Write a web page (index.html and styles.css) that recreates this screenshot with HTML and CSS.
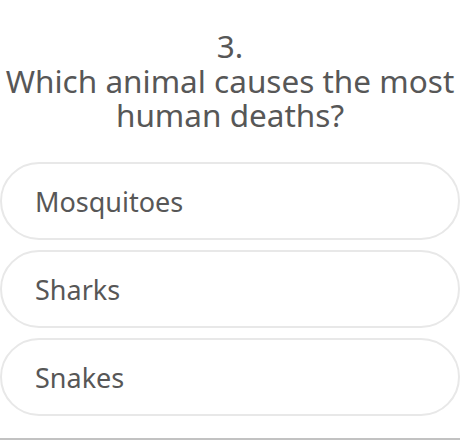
FILE: index.html
```html
<!DOCTYPE html>
<html>
<head>
<meta charset="utf-8">
<link rel="stylesheet" href="styles.css">
</head>
<body>
<div class="quiz">
  <div class="number">3.</div>
  <h1 class="question">Which animal causes the most<br>human deaths?</h1>
  <ul class="options">
    <li class="option">Mosquitoes</li>
    <li class="option">Sharks</li>
    <li class="option">Snakes</li>
  </ul>
  <div class="rule"></div>
</div>
</body>
</html>
```
FILE: styles.css
```css
html, body {
  margin: 0;
  padding: 0;
  background: #ffffff;
}
.quiz {
  width: 460px;
  height: 440px;
  display: flex;
  flex-direction: column;
  font-family: "Noto Sans", sans-serif;
  color: #575757;
}
.number {
  padding-top: 29px;
  font-size: 31.5px;
  line-height: 34px;
  text-align: center;
}
.question {
  margin: 1px 0 0 0;
  font-size: 31.5px;
  font-weight: 400;
  line-height: 34px;
  text-align: center;
  white-space: nowrap;
}
.options {
  list-style: none;
  margin: 30px 0 0 0;
  padding: 0;
  display: flex;
  flex-direction: column;
  gap: 10px;
}
.option {
  box-sizing: border-box;
  width: 460px;
  height: 78px;
  border: 2px solid #e8e8e8;
  border-radius: 39px;
  padding-left: 33px;
  display: flex;
  align-items: center;
  font-size: 27px;
}
.rule {
  margin-top: auto;
  height: 2px;
  background: #c2c2c2;
}
```
